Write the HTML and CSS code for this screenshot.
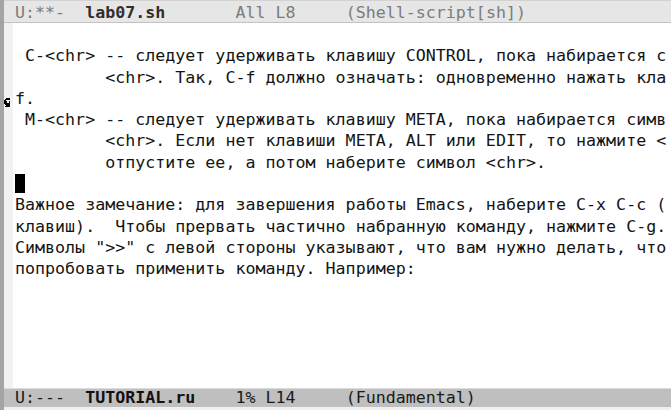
FILE: index.html
```html
<!DOCTYPE html>
<html lang="ru">
<head>
<meta charset="utf-8">
<title>Emacs — TUTORIAL.ru</title>
<link rel="stylesheet" href="styles.css">
</head>
<body>
<div class="frame">
  <div class="strip"></div>
  <div class="window">
    <div class="modeline inactive"><span class="ml-pre">U:**-  </span><span class="ml-name">lab07.sh</span><span class="ml-rest">       All L8     (Shell-script[sh])</span></div>
    <div class="buffer">
      <div class="fringe">
        <div class="frow"></div>
        <div class="frow"></div>
        <div class="frow"></div>
        <div class="frow arrowrow">
          <svg class="curly" width="10" height="9" viewBox="0 0 8 8" shape-rendering="crispEdges">
            <rect x="2" y="0" width="4" height="1" fill="#000"/>
            <rect x="1" y="1" width="5" height="1" fill="#000"/>
            <rect x="0" y="2" width="2" height="1" fill="#000"/>
            <rect x="0" y="3" width="3" height="1" fill="#000"/>
            <rect x="5" y="3" width="1" height="1" fill="#000"/>
            <rect x="0" y="4" width="6" height="1" fill="#000"/>
            <rect x="1" y="5" width="5" height="1" fill="#000"/>
            <rect x="2" y="6" width="4" height="1" fill="#000"/>
            <rect x="1" y="7" width="5" height="1" fill="#000"/>
          </svg>
        </div>
      </div>
      <div class="text">
        <div class="line"> </div>
        <div class="line"> C-&lt;chr&gt; -- следует удерживать клавишу CONTROL, пока набирается с</div>
        <div class="line">         &lt;chr&gt;. Так, C-f должно означать: одновременно нажать кла</div>
        <div class="line">f.</div>
        <div class="line"> M-&lt;chr&gt; -- следует удерживать клавишу META, пока набирается симв</div>
        <div class="line">         &lt;chr&gt;. Если нет клавиши META, ALT или EDIT, то нажмите &lt;</div>
        <div class="line">         отпустите ее, а потом наберите символ &lt;chr&gt;.</div>
        <div class="line"><span class="cursor"> </span></div>
        <div class="line">Важное замечание: для завершения работы Emacs, наберите C-x C-c (</div>
        <div class="line">клавиш).  Чтобы прервать частично набранную команду, нажмите C-g.</div>
        <div class="line">Символы "&gt;&gt;" с левой стороны указывают, что вам нужно делать, что</div>
        <div class="line">попробовать применить команду. Например:</div>
      </div>
    </div>
    <div class="modeline active"><span class="ml-pre">U:---  </span><span class="ml-name">TUTORIAL.ru</span><span class="ml-rest">    1% L14     (Fundamental)</span></div>
    <div class="bottomgap"></div>
  </div>
</div>
</body>
</html>
```
FILE: styles.css
```css
html, body {
  margin: 0;
  padding: 0;
  background: #ffffff;
}
body {
  width: 671px;
  height: 410px;
  overflow: hidden;
}
.frame {
  display: flex;
  width: 671px;
  height: 410px;
  overflow: hidden;
}
.strip {
  flex: 0 0 4px;
  background: #a4a4a4;
}
.window {
  flex: 1 1 auto;
  display: flex;
  flex-direction: column;
  min-width: 0;
}
.modeline {
  font-family: "DejaVu Sans Mono", monospace;
  font-size: 16.65px;
  white-space: pre;
  padding-left: 11px;
  box-sizing: border-box;
  overflow: hidden;
  flex: 0 0 auto;
}
.modeline.inactive {
  height: 23px;
  line-height: 23px;
  background: #e6e6e6;
  border-top: 1px solid #d2d2d2;
  border-bottom: 1px solid #c2c2c2;
  color: #7c7c7c;
}
.modeline.inactive .ml-name {
  color: #2f2f2f;
  font-weight: bold;
}
.modeline.active {
  height: 19px;
  line-height: 18px;
  background: #bfbfbf;
  border-top: 1px solid #dcdcdc;
  color: #1a1a1a;
}
.modeline.active .ml-name {
  color: #111;
  font-weight: bold;
}
.bottomgap {
  height: 3px;
  flex: 0 0 3px;
  background: #f0f0f0;
}
.buffer {
  flex: 1 1 auto;
  display: flex;
  background: #ffffff;
  overflow: hidden;
  padding-top: 1px;
}
.fringe {
  flex: 0 0 9px;
  background: #f2f2f2;
  display: flex;
  flex-direction: column;
  margin-top: -1px;
  padding-top: 1px;
}
.frow {
  height: 21.3px;
  flex: 0 0 21.3px;
}
.arrowrow {
  display: flex;
  align-items: flex-end;
  padding-bottom: 2px;
  box-sizing: border-box;
}
.curly {
  display: block;
  margin-left: -1px;
}
.text {
  margin-left: 2px;
  font-family: "DejaVu Sans Mono", monospace;
  font-size: 16.65px;
  line-height: 21.3px;
  color: #141414;
  display: flex;
  flex-direction: column;
  min-width: 0;
}
.line {
  height: 21.3px;
  white-space: pre;
}
.cursor {
  background: #000;
}
```
